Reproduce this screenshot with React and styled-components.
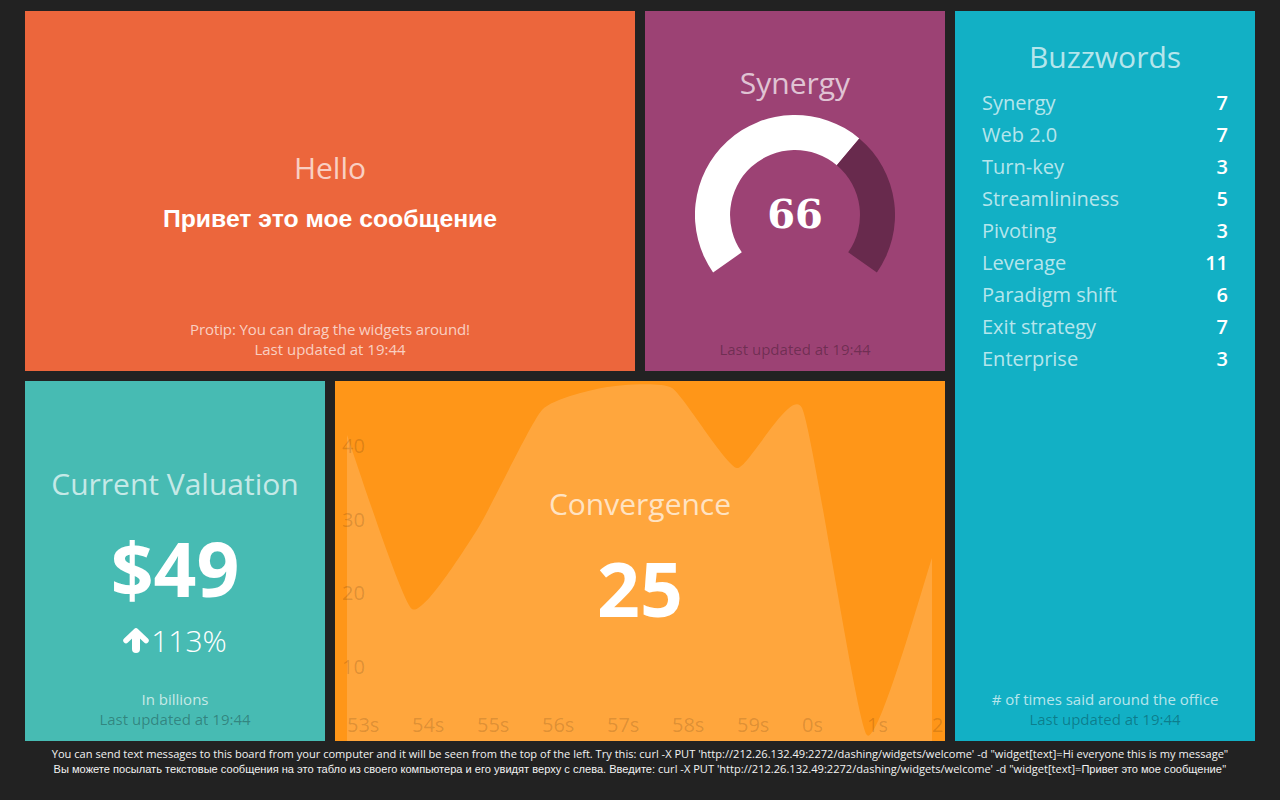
import React from "react";
import styled, { createGlobalStyle } from "styled-components";

const GlobalStyle = createGlobalStyle`
  html, body {
    margin: 0;
    height: 100%;
    background: #222222;
    font-family: "Open Sans", "Liberation Sans", sans-serif;
    overflow: hidden;
  }
`;

const buzzwords = [
  ["Synergy", 7],
  ["Web 2.0", 7],
  ["Turn-key", 3],
  ["Streamlininess", 5],
  ["Pivoting", 3],
  ["Leverage", 11],
  ["Paradigm shift", 6],
  ["Exit strategy", 7],
  ["Enterprise", 3],
];

const chartPoints = [
  [12, 54],
  [77, 228],
  [142, 149],
  [207, 29],
  [272, 6],
  [337, 7],
  [402, 87],
  [467, 27],
  [532, 354],
  [597, 177],
];
const yTicks = [
  ["40", 65],
  ["30", 139],
  ["20", 212],
  ["10", 286],
];
const xTicks = ["53s", "54s", "55s", "56s", "57s", "58s", "59s", "0s", "1s", "2"];

// same curve a cardinal line gives, tension 0.75
const cardinalPath = (pts) => {
  const k = 0.125;
  const tangent = (i) => {
    const a = pts[Math.max(i - 1, 0)];
    const b = pts[Math.min(i + 1, pts.length - 1)];
    return [(b[0] - a[0]) * k, (b[1] - a[1]) * k];
  };
  let d = `M${pts[0][0]},${pts[0][1]}`;
  for (let i = 1; i < pts.length; i++) {
    const t0 = tangent(i - 1);
    const t1 = tangent(i);
    const p0 = pts[i - 1];
    const p1 = pts[i];
    d += `C${p0[0] + (t0[0] * 2) / 3},${p0[1] + (t0[1] * 2) / 3} ${p1[0] - (t1[0] * 2) / 3},${p1[1] - (t1[1] * 2) / 3} ${p1[0]},${p1[1]}`;
  }
  return d;
};

const ArrowUp = () => (
  <ArrowSvg viewBox="0 0 26 25">
    <line x1="13" y1="6" x2="13" y2="21" stroke="#fff" strokeWidth="8" strokeLinecap="round" />
    <polyline
      points="3,12.5 13,3 23,12.5"
      fill="none"
      stroke="#fff"
      strokeWidth="5.5"
      strokeLinecap="round"
      strokeLinejoin="round"
    />
  </ArrowSvg>
);

const App = () => (
  <>
    <GlobalStyle />
    <Board>
      <HelloTile>
        <Centered $top={56}>
          <Title>Hello</Title>
          <Message>Привет это мое сообщение</Message>
        </Centered>
        <Protip>Protip: You can drag the widgets around!</Protip>
        <UpdatedAt $light>Last updated at 19:44</UpdatedAt>
      </HelloTile>

      <SynergyTile>
        <GaugeBody>
          <Title>Synergy</Title>
          <GaugeSvg viewBox="0 0 200 160">
            <path
              d="M18.1 159.4A100 100 0 0 1 164.3 25.4L141.8 52.2A65 65 0 0 0 46.8 139.3Z"
              fill="#ffffff"
            />
            <path
              d="M164.3 25.4A100 100 0 0 1 181.9 159.4L153.2 139.3A65 65 0 0 0 141.8 52.2Z"
              fill="#682a4d"
            />
            <GaugeValue x="100" y="115" textAnchor="middle">
              66
            </GaugeValue>
          </GaugeSvg>
        </GaugeBody>
        <UpdatedAt>Last updated at 19:44</UpdatedAt>
      </SynergyTile>

      <BuzzTile>
        <BuzzBody>
          <Title>Buzzwords</Title>
          <BuzzList>
            {buzzwords.map(([label, value]) => (
              <BuzzRow key={label}>
                <BuzzLabel>{label}</BuzzLabel>
                <BuzzValue>{value}</BuzzValue>
              </BuzzRow>
            ))}
          </BuzzList>
        </BuzzBody>
        <MoreInfo># of times said around the office</MoreInfo>
        <UpdatedAt>Last updated at 19:44</UpdatedAt>
      </BuzzTile>

      <ValuationTile>
        <Centered>
          <Title>Current Valuation</Title>
          <BigNumber>$49</BigNumber>
          <Change>
            <ArrowUp />
            <span>113%</span>
          </Change>
        </Centered>
        <MoreInfo>In billions</MoreInfo>
        <UpdatedAt>Last updated at 19:44</UpdatedAt>
      </ValuationTile>

      <ConvergenceTile>
        <ChartSvg viewBox="0 0 610 360">
          <path d={`${cardinalPath(chartPoints)}L597,360L12,360Z`} fill="rgba(255,255,255,0.16)" />
          {yTicks.map(([label, y]) => (
            <AxisText key={label} x="7" y={y + 7}>
              {label}
            </AxisText>
          ))}
          {xTicks.map((label, i) => (
            <AxisText key={label} x={12 + i * 65} y="351">
              {label}
            </AxisText>
          ))}
        </ChartSvg>
        <Centered $top={10}>
          <Title>Convergence</Title>
          <BigNumber>25</BigNumber>
        </Centered>
      </ConvergenceTile>
    </Board>
    <Notice>
      <div>
        You can send text messages to this board from your computer and it will be seen from the top
        of the left. Try this: curl -X PUT 'http://212.26.132.49:2272/dashing/widgets/welcome' -d
        "widget[text]=Hi everyone this is my message"
      </div>
      <div>
        <Cyr>
          Вы можете посылать текстовые сообщения на это табло из своего компьютера и его увидят верху
          с слева. Введите:
        </Cyr>{" "}
        curl -X PUT 'http://212.26.132.49:2272/dashing/widgets/welcome' -d "widget[text]=
        <Cyr>Привет это мое сообщение</Cyr>"
      </div>
    </Notice>
  </>
);

const Board = styled.div`
  display: grid;
  grid-template-columns: repeat(4, 300px);
  grid-template-rows: repeat(2, 360px);
  gap: 10px;
  padding: 11px 25px 0;
`;

const Tile = styled.section`
  position: relative;
  display: flex;
  flex-direction: column;
  overflow: hidden;
  padding-bottom: 12px;
  box-sizing: border-box;
  text-align: center;
`;

const HelloTile = styled(Tile)`
  grid-column: span 2;
  background: #ec663c;
`;

const SynergyTile = styled(Tile)`
  background: #9c4274;
`;

const BuzzTile = styled(Tile)`
  grid-row: span 2;
  background: #12b0c5;
`;

const ValuationTile = styled(Tile)`
  background: #47bbb3;
`;

const ConvergenceTile = styled(Tile)`
  grid-column: span 2;
  background: #ff9618;
`;

const Centered = styled.div`
  position: relative;
  flex: 1;
  display: flex;
  flex-direction: column;
  align-items: center;
  justify-content: center;
  padding-top: ${(p) => p.$top ?? 54}px;
`;

const Title = styled.h1`
  margin: 0;
  font-size: 30px;
  line-height: 38px;
  font-weight: 400;
  color: rgba(255, 255, 255, 0.7);
`;

const Message = styled.h3`
  margin: 13px 0 0;
  font-family: "Liberation Sans", sans-serif;
  font-size: 24.75px;
  line-height: 38px;
  font-weight: 700;
  color: #ffffff;
`;

const MoreInfo = styled.p`
  margin: 0;
  font-size: 15px;
  line-height: 20px;
  font-weight: 400;
  color: rgba(255, 255, 255, 0.7);
`;

const Protip = styled(MoreInfo)`
  letter-spacing: -0.12px;
`;

const UpdatedAt = styled.p`
  margin: 0;
  font-size: 15px;
  line-height: 20px;
  color: ${(p) => (p.$light ? "rgba(255, 255, 255, 0.7)" : "rgba(0, 0, 0, 0.3)")};
`;

const GaugeBody = styled.div`
  flex: 1;
  display: flex;
  flex-direction: column;
  align-items: center;
  padding-top: 53px;
`;

const GaugeSvg = styled.svg`
  display: block;
  width: 200px;
  height: 160px;
  margin-top: 11px;
`;

const GaugeValue = styled.text`
  font-family: "DejaVu Serif", serif;
  font-size: 40px;
  font-weight: 700;
  fill: #ffffff;
`;

const BuzzBody = styled.div`
  flex: 1;
  padding: 27px 27px 0;
`;

const BuzzList = styled.ul`
  list-style: none;
  margin: 11px 0 0;
  padding: 0;
`;

const BuzzRow = styled.li`
  display: flex;
  justify-content: space-between;
  font-size: 20px;
  line-height: 32px;
`;

const BuzzLabel = styled.span`
  font-weight: 400;
  color: rgba(255, 255, 255, 0.7);
`;

const BuzzValue = styled.span`
  font-weight: 600;
  color: #ffffff;
`;

const BigNumber = styled.div`
  margin-top: 17px;
  font-size: 75px;
  line-height: 96px;
  font-weight: 700;
  color: #ffffff;
`;

const Change = styled.div`
  display: flex;
  align-items: center;
  gap: 2px;
  margin-top: 6px;
  font-size: 30px;
  line-height: 38px;
  font-weight: 300;
  color: #ffffff;
`;

const ArrowSvg = styled.svg`
  display: block;
  width: 26px;
  height: 25px;
`;

const ChartSvg = styled.svg`
  position: absolute;
  inset: 0;
  width: 610px;
  height: 360px;
`;

const AxisText = styled.text`
  font-size: 20px;
  fill: rgba(0, 0, 0, 0.15);
`;

const Notice = styled.footer`
  padding-top: 5px;
  text-align: center;
  font-size: 11.08px;
  line-height: 15px;
  color: #f2f2f2;
`;

const Cyr = styled.span`
  font-family: "Liberation Sans", sans-serif;
`;

export default App;
